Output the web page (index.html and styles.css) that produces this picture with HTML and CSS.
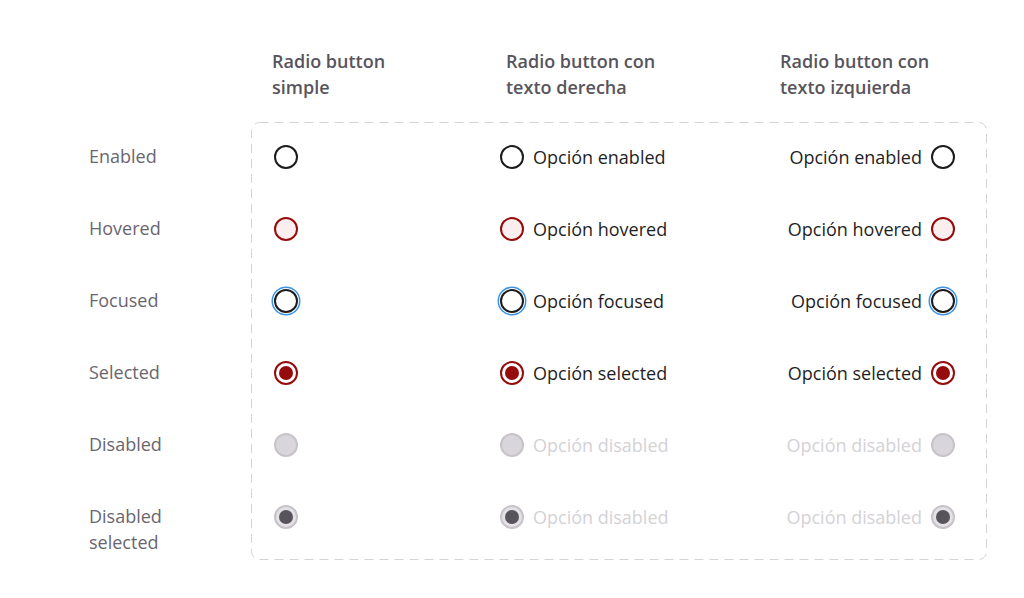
FILE: index.html
```html
<!DOCTYPE html>
<html lang="es">
<head>
<meta charset="utf-8">
<title>Radio buttons</title>
<link rel="stylesheet" href="styles.css">
</head>
<body>
<div class="page">
  <div class="corner"></div>
  <div class="heads">
    <div class="head">Radio button<br>simple</div>
    <div class="head">Radio button con<br>texto derecha</div>
    <div class="head">Radio button con<br>texto izquierda</div>
  </div>

  <div class="labels">
    <div class="label">Enabled</div>
    <div class="label">Hovered</div>
    <div class="label">Focused</div>
    <div class="label">Selected</div>
    <div class="label">Disabled</div>
    <div class="label">Disabled<br>selected</div>
  </div>

  <div class="box">
    <svg class="frame" width="736" height="438" viewBox="0 0 736 438" aria-hidden="true">
      <rect x="0.5" y="0.5" width="735" height="437" rx="8" ry="8" fill="none" stroke="#d5d3d7" stroke-width="1" stroke-dasharray="9 6"/>
    </svg>
    <div class="row">
      <div class="cell"><span class="radio"></span></div>
      <div class="cell"><span class="radio"></span><span class="txt">Opción enabled</span></div>
      <div class="cell end"><span class="txt">Opción enabled</span><span class="radio"></span></div>
    </div>
    <div class="row">
      <div class="cell"><span class="radio hover"></span></div>
      <div class="cell"><span class="radio hover"></span><span class="txt">Opción hovered</span></div>
      <div class="cell end"><span class="txt">Opción hovered</span><span class="radio hover"></span></div>
    </div>
    <div class="row">
      <div class="cell"><span class="radio focus"></span></div>
      <div class="cell"><span class="radio focus"></span><span class="txt">Opción focused</span></div>
      <div class="cell end"><span class="txt">Opción focused</span><span class="radio focus"></span></div>
    </div>
    <div class="row">
      <div class="cell"><span class="radio sel"></span></div>
      <div class="cell"><span class="radio sel"></span><span class="txt">Opción selected</span></div>
      <div class="cell end"><span class="txt">Opción selected</span><span class="radio sel"></span></div>
    </div>
    <div class="row">
      <div class="cell"><span class="radio dis"></span></div>
      <div class="cell"><span class="radio dis"></span><span class="txt muted">Opción disabled</span></div>
      <div class="cell end"><span class="txt muted">Opción disabled</span><span class="radio dis"></span></div>
    </div>
    <div class="row">
      <div class="cell"><span class="radio dissel"></span></div>
      <div class="cell"><span class="radio dissel"></span><span class="txt muted">Opción disabled</span></div>
      <div class="cell end"><span class="txt muted">Opción disabled</span><span class="radio dissel"></span></div>
    </div>
  </div>
</div>
</body>
</html>
```

FILE: styles.css
```css
* { box-sizing: border-box; }
html, body { margin: 0; padding: 0; background: #ffffff; }
body {
  font-family: "Open Sans", "Liberation Sans", sans-serif;
  font-size: 18px;
  line-height: 26px;
  color: #1f1f1f;
}
.page {
  display: grid;
  grid-template-columns: 162px 736px;
  grid-template-rows: auto auto;
  row-gap: 22px;
  padding: 48px 0 0 89px;
}
.heads {
  display: grid;
  grid-template-columns: 234px 274px auto;
  padding-left: 21px;
}
.head {
  font-weight: 600;
  color: #58545c;
}
.labels {
  display: flex;
  flex-direction: column;
  gap: 24px;
  padding-top: 10px;
}
.label {
  height: 48px;
  padding-top: 11px;
  color: #6a6670;
  white-space: nowrap;
}
.box {
  position: relative;
  height: 438px;
  border: 1px solid transparent;
  padding: 10px 31px 18px 22px;
  display: flex;
  flex-direction: column;
  gap: 24px;
}
.frame {
  position: absolute;
  left: -1px;
  top: -1px;
  pointer-events: none;
}
.row {
  height: 48px;
  display: grid;
  grid-template-columns: 226px 260px 1fr;
  align-items: center;
}
.cell {
  display: flex;
  align-items: center;
  gap: 9px;
}
.cell.end { justify-content: flex-end; }
.txt { white-space: nowrap; }
.txt.muted { color: #d4d2d6; }
.radio {
  flex: none;
  width: 24px;
  height: 24px;
  border-radius: 50%;
  border: 2px solid #1c1c1c;
  background: #ffffff;
  position: relative;
}
.radio.hover {
  border-color: #960c0c;
  background: #fbeeef;
}
.radio.focus {
  box-shadow: 0 0 0 1px #ffffff, 0 0 0 2.5px #3b93ea;
}
.radio.sel {
  border-color: #960c0c;
}
.radio.sel::after,
.radio.dissel::after {
  content: "";
  position: absolute;
  left: 3px;
  top: 3px;
  width: 14px;
  height: 14px;
  border-radius: 50%;
  background: #960c0c;
}
.radio.dis {
  border-color: #c6c3c9;
  background: #d9d6db;
}
.radio.dissel {
  border-color: #c6c3c9;
  background: #e4e2e6;
}
.radio.dissel::after {
  background: #58545c;
}
```
